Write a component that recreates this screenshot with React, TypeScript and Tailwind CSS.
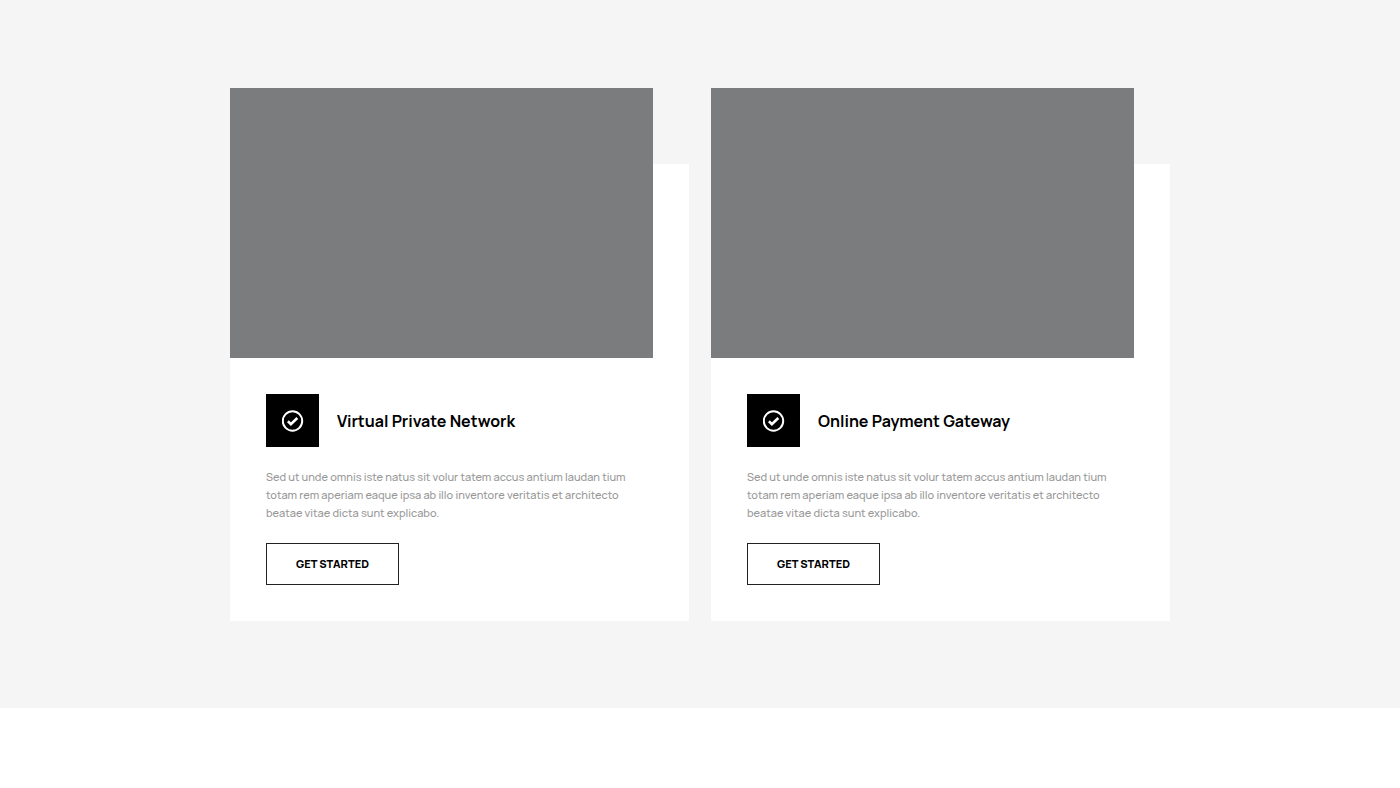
const services = [
  {
    id: "vpn",
    title: "Virtual Private Network",
    text: "Sed ut unde omnis iste natus sit volur tatem accus antium laudan tium totam rem aperiam eaque ipsa ab illo inventore veritatis et architecto beatae vitae dicta sunt explicabo.",
  },
  {
    id: "payment",
    title: "Online Payment Gateway",
    text: "Sed ut unde omnis iste natus sit volur tatem accus antium laudan tium totam rem aperiam eaque ipsa ab illo inventore veritatis et architecto beatae vitae dicta sunt explicabo.",
  },
];

function CheckIcon() {
  return (
    <svg viewBox="0 0 22 22" fill="none" stroke="currentColor" className="size-[22px]" aria-hidden="true">
      <circle cx="10.5" cy="11" r="9.7" strokeWidth="2" />
      <path d="M5.9 11.2 8.9 14.1 15.3 8" strokeWidth="2.6" />
    </svg>
  );
}

function ServiceCard({ id, title, text }: { id: string; title: string; text: string }) {
  return (
    <article className="mt-[76px] bg-white">
      <div className="-mt-[76px] mr-9 h-[270px] bg-[#7b7c7d]" />
      <div className="p-9">
        <div className="flex items-center gap-[18px]">
          <div className="flex size-[53px] shrink-0 items-center justify-center bg-black text-white">
            <CheckIcon />
          </div>
          <h3 className="text-base font-bold text-black">{title}</h3>
        </div>
        <p className="mt-[21px] pr-3 text-[11px] leading-[18px] font-medium text-[#999999]">{text}</p>
        <a
          href={`#${id}`}
          className="mt-[21px] inline-flex h-[42px] items-center border border-[#222222] px-[29px] text-[11px] font-extrabold text-black uppercase hover:bg-black hover:text-white"
        >
          Get Started
        </a>
      </div>
    </article>
  );
}

export default function App() {
  return (
    <main className="min-h-screen bg-white font-['Manrope','Inter',sans-serif]">
      <section className="bg-[#f5f5f5] px-4 pt-[88px] pb-[87px]">
        <div className="mx-auto grid max-w-[940px] gap-[22px] md:grid-cols-2">
          {services.map((s) => (
            <ServiceCard key={s.id} {...s} />
          ))}
        </div>
      </section>
    </main>
  );
}
